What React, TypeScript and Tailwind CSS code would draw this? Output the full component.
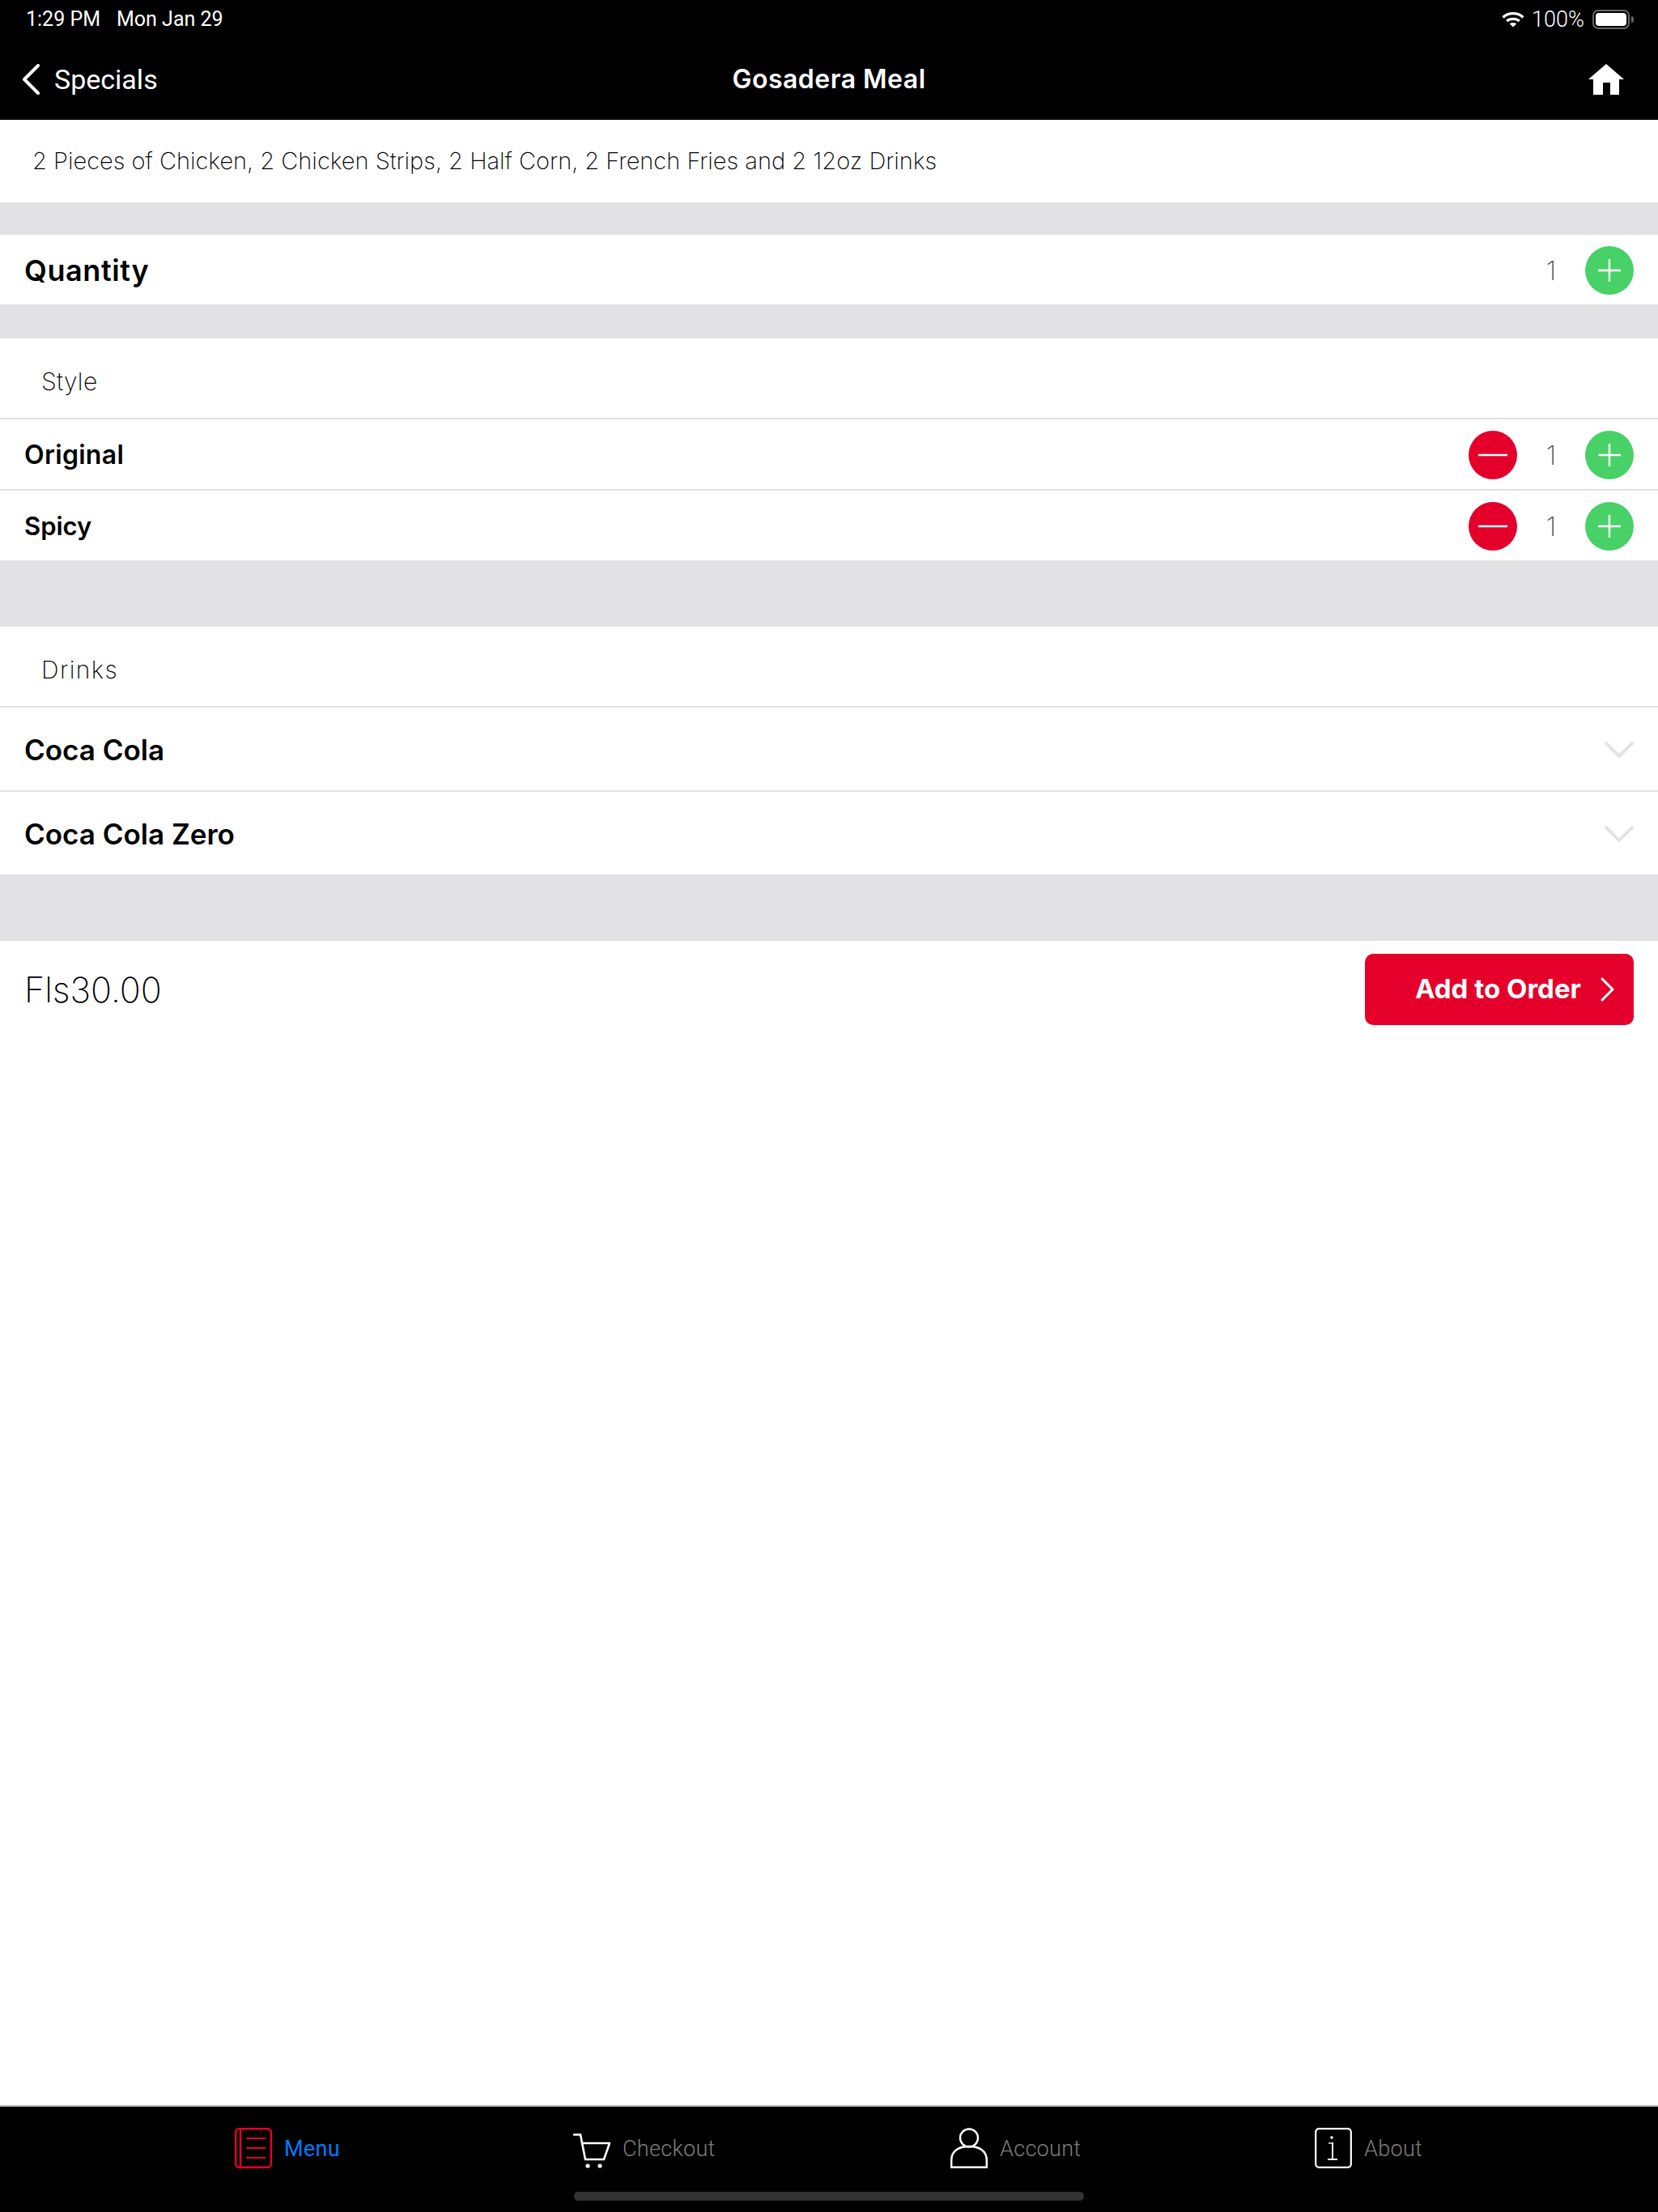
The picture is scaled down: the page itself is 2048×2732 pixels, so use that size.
function Chevron({ dir, className }: { dir: "left" | "right" | "down"; className: string }) {
  const d = dir === "left" ? "M20 2 L3 19 L20 36" : dir === "right" ? "M2 2 L15 15 L2 28" : "M2 2 L18 18 L34 2"
  const box = dir === "left" ? "0 0 22 38" : dir === "right" ? "0 0 17 30" : "0 0 36 20"
  return (
    <svg viewBox={box} className={className} fill="none" stroke="currentColor" strokeWidth={dir === "right" ? 3 : 4} strokeLinecap="round" strokeLinejoin="round">
      <path d={d} />
    </svg>
  )
}

function RoundButton({ kind }: { kind: "plus" | "minus" }) {
  const bg = kind === "plus" ? "bg-[#48d167]" : "bg-[#e4002b]"
  return (
    <div className={`flex h-[60px] w-[60px] items-center justify-center rounded-full ${bg}`}>
      <svg viewBox="0 0 36 36" className="h-[36px] w-[36px]" stroke="#fff" strokeWidth="2.4" fill="none">
        {kind === "plus" ? <path d="M4 18 H32 M18 4 V32" /> : <path d="M0 18 H36" />}
      </svg>
    </div>
  )
}

function Stepper({ minus }: { minus?: boolean }) {
  return (
    <div className="flex items-center">
      {minus && <RoundButton kind="minus" />}
      <span className="w-[84px] text-center text-[33px] leading-none font-extralight text-[#555]">1</span>
      <RoundButton kind="plus" />
    </div>
  )
}

function Gap({ h }: { h: string }) {
  return <div className={`bg-[#e2e2e4] ${h}`} />
}

function Tab({ label, width, active, children }: { label: string; width: string; active?: boolean; children: React.ReactNode }) {
  return (
    <div className={`flex items-center gap-[15px] ${width}`}>
      {children}
      <span className={`pt-[3px] font-['Roboto'] text-[27px] tracking-[0.3px] ${active ? "font-normal text-[#007aff]" : "font-light text-[#7d7d7d]"}`}>{label}</span>
    </div>
  )
}

export default function App() {
  return (
    <div className="flex h-[2732px] w-[2048px] flex-col bg-white font-['Inter',sans-serif] text-black">
      <header className="h-[148px] bg-black text-white">
        <div className="flex h-[48px] items-center justify-between pr-[30px] pl-[32px] font-['Roboto'] text-[25px]">
          <div className="flex gap-[20px]">
            <span>1:29 PM</span>
            <span>Mon Jan 29</span>
          </div>
          <div className="flex items-center">
            <svg viewBox="0 0 28 20" className="h-[20px] w-[28px]" fill="none" stroke="#fff" strokeWidth="3.2">
              <path d="M1.5 7.5 C8 1 20 1 26.5 7.5" />
              <path d="M6.2 12 C10 8.5 18 8.5 21.8 12" />
              <path d="M14 19.5 L9.8 15.6 C12 13.6 16 13.6 18.2 15.6 Z" fill="#fff" stroke="none" />
            </svg>
            <span className="mr-[10px] ml-[9px] text-[27px] font-light">100%</span>
            <div className="flex h-[24px] w-[46px] items-center rounded-[7px] border-2 border-[#666] p-[2px]">
              <div className="h-full w-full rounded-[4px] bg-white" />
            </div>
            <div className="ml-[2px] h-[8px] w-[3px] rounded-r-full bg-[#666]" />
          </div>
        </div>
        <div className="flex h-[100px] items-center justify-between pr-[42px] pl-[27px]">
          <div className="flex w-[515px] items-center gap-[18px]">
            <Chevron dir="left" className="h-[38px] w-[22px] text-white" />
            <span className="font-['Roboto'] text-[34px]">Specials</span>
          </div>
          <span className="text-[32px] font-semibold tracking-[0.5px]">Gosadera Meal</span>
          <div className="flex w-[500px] justify-end">
            <svg viewBox="0 0 44 38" className="h-[38px] w-[44px]" fill="#fff">
              <path d="M22 0 L44 19 L38 19 L38 38 L27 38 L27 23 L18 23 L18 38 L6 38 L6 19 L0 19 Z" />
            </svg>
          </div>
        </div>
      </header>

      <div className="flex h-[102px] items-center pl-[40px] text-[29px] font-[250] text-black">
        2 Pieces of Chicken, 2 Chicken Strips, 2 Half Corn, 2 French Fries and 2 12oz Drinks
      </div>
      <Gap h="h-[40px]" />

      <div className="flex h-[86px] items-center justify-between pt-[2px] pr-[30px] pl-[30px]">
        <span className="text-[36px] font-semibold tracking-[0.6px]">Quantity</span>
        <Stepper />
      </div>
      <Gap h="h-[42px]" />

      <div className="flex h-[100px] items-center border-b-2 border-[#e2e2e4] pt-[8px] pl-[51px] text-[30px] font-[250] tracking-[0.3px] text-black">Style</div>
      <div className="flex h-[88px] items-center justify-between border-b-2 border-[#e2e2e4] pt-[2px] pr-[30px] pl-[30px]">
        <span className="text-[32px] font-semibold tracking-[0.3px]">Original</span>
        <Stepper minus />
      </div>
      <div className="flex h-[86px] items-center justify-between pt-[2px] pr-[30px] pl-[30px]">
        <span className="text-[31px] font-semibold">Spicy</span>
        <Stepper minus />
      </div>
      <Gap h="h-[82px]" />

      <div className="flex h-[100px] items-center border-b-2 border-[#e2e2e4] pt-[8px] pl-[51px] text-[30px] font-[250] tracking-[1.4px] text-black">Drinks</div>
      <div className="flex h-[104px] items-center justify-between border-b-2 border-[#e2e2e4] pt-[2px] pr-[30px] pl-[30px]">
        <span className="text-[35px] font-semibold">Coca Cola</span>
        <Chevron dir="down" className="h-[20px] w-[36px] text-[#e3e3e5]" />
      </div>
      <div className="flex h-[102px] items-center justify-between pt-[2px] pr-[30px] pl-[30px]">
        <span className="text-[35px] font-semibold">Coca Cola Zero</span>
        <Chevron dir="down" className="h-[20px] w-[36px] text-[#e3e3e5]" />
      </div>
      <Gap h="h-[82px]" />

      <div className="flex items-center justify-between pt-[16px] pr-[30px] pl-[30px]">
        <span className="text-[43px] font-[250] text-black">Fls30.00</span>
        <div className="flex h-[88px] w-[332px] items-center justify-end gap-[24px] rounded-[10px] bg-[#e4002b] pr-[24px] text-white">
          <span className="text-[33px] font-bold">Add to Order</span>
          <Chevron dir="right" className="h-[30px] w-[17px] text-white" />
        </div>
      </div>

      <div className="flex-1" />

      <footer className="flex h-[132px] flex-col border-t-2 border-[#b5b5b5] bg-black">
        <div className="flex h-[102px] items-center pl-[290px]">
          <Tab label="Menu" width="w-[418px]" active>
            <svg viewBox="0 0 46 50" className="h-[50px] w-[46px]" fill="none" stroke="#e4002b" strokeWidth="2.4">
              <rect x="1.2" y="1.2" width="43.6" height="47.6" rx="4" />
              <path d="M7 1 V49" />
              <path d="M14 13 H38 M14 25 H38 M14 37 H38" strokeWidth="1.8" />
            </svg>
          </Tab>
          <Tab label="Checkout" width="w-[466px]">
            <svg viewBox="0 0 46 44" className="mt-[7px] h-[44px] w-[46px]" fill="none" stroke="#fff" strokeWidth="2.6">
              <path d="M0 1.5 H9 L15 32 H38 L45 12 H11" />
              <circle cx="18" cy="40" r="2.6" fill="#fff" stroke="none" />
              <circle cx="33" cy="40" r="2.6" fill="#fff" stroke="none" />
            </svg>
          </Tab>
          <Tab label="Account" width="w-[450px]">
            <svg viewBox="0 0 46 50" className="h-[50px] w-[46px]" fill="none" stroke="#fff" strokeWidth="2.4">
              <circle cx="23" cy="12.5" r="11" />
              <path d="M1.2 48.8 V40 C1.2 28 11 23 23 23 C35 23 44.8 28 44.8 40 V48.8 Z" />
            </svg>
          </Tab>
          <Tab label="About" width="w-[200px]">
            <svg viewBox="0 0 46 50" className="h-[50px] w-[46px]" fill="none" stroke="#fff" strokeWidth="2.2">
              <rect x="1.2" y="1.2" width="43.6" height="47.6" rx="4" />
              <circle cx="21" cy="12" r="1.8" fill="#fff" stroke="none" />
              <path d="M22 18 V39 M16 39 H28" strokeWidth="1.8" />
              <path d="M17 19 H22" strokeWidth="1.4" />
            </svg>
          </Tab>
        </div>
        <div className="mt-[3px] flex justify-center">
          <div className="h-[11px] w-[630px] rounded-full bg-[#333]" />
        </div>
      </footer>
    </div>
  )
}
